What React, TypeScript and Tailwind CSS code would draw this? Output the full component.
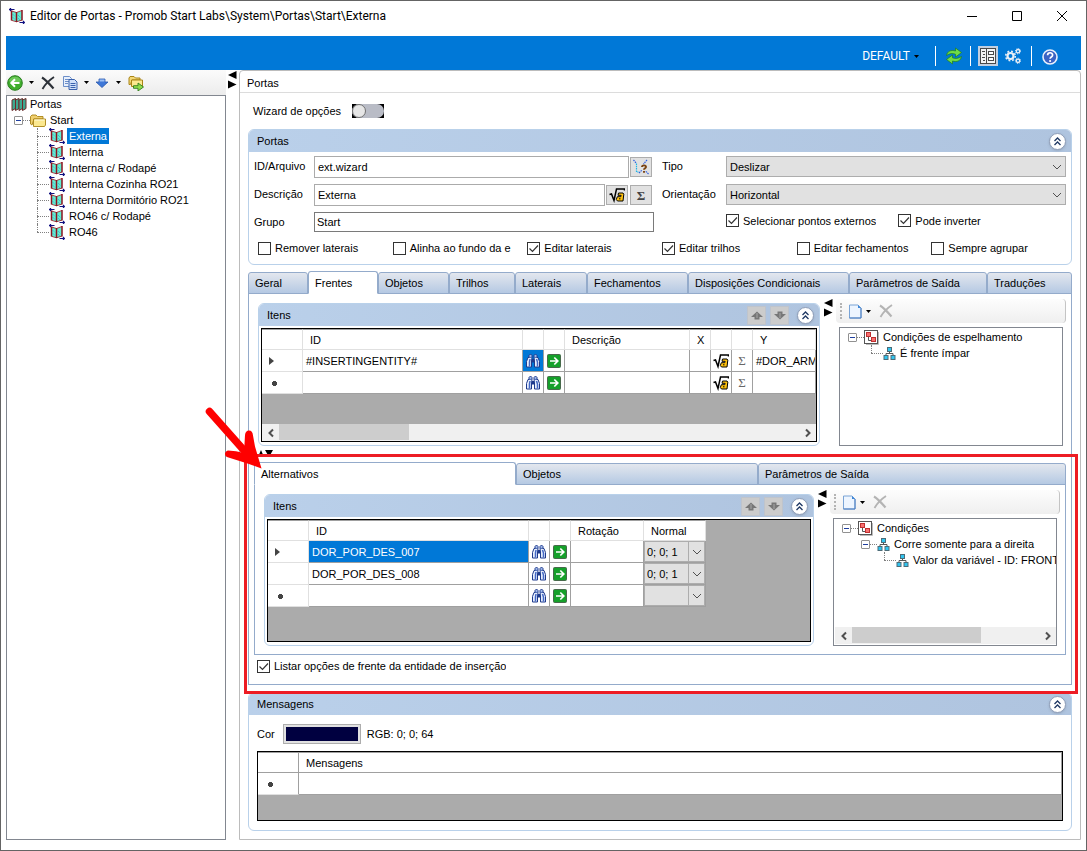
import { useState, type ReactNode } from 'react';
import clsx from 'clsx';

/* ---------- icons ---------- */

function DoorIcon() {
  return (
    <svg viewBox="0 0 16 16" className="h-4 w-4 shrink-0">
      <path d="M2.500 3l4.500 1.500v9L2.500 12z" fill="#62efd2" />
      <path d="M8 4.500L13 3v9l-5 1.500z" fill="#62efd2" />
      <path d="M3.500 6l3 3M3.500 9l3 3M9 7l3 3M9 10l2 2" stroke="#3aa0d8" strokeDasharray="1 1" />
      <path d="M2.500 2.500v10M7.500 4v10M13 2v10.500" stroke="#8a1420" strokeWidth="1.500" />
      <path d="M2.500 12.300l5 1.500L13 12M2.500 3l5 1.500L13 2.500" fill="none" stroke="#8a1420" strokeWidth=".8" />
      <path d="M0 1.500h5.500M2 0L.5 1.500 2 3M10.500 14.500h5M14 13l1.500 1.500L14 16" fill="none" stroke="#101080" strokeWidth="1.100" />
    </svg>
  );
}

function DoorsIcon() {
  return (
    <svg viewBox="0 0 16 16" className="h-4 w-4 shrink-0">
      {[1, 4.500, 8, 11.500].map((x) => (
        <path key={x} d={`M${x} 4l3.500-1.500v10l-3.500 2z`} fill="#3fa890" stroke="#6e2a2a" />
      ))}
    </svg>
  );
}

function FolderIcon() {
  return (
    <svg viewBox="0 0 16 16" className="h-4 w-4 shrink-0">
      <path d="M.5 12V4.500L2 3h4l1.500 1.500H13V7H4l-2 6z" fill="#f0d070" stroke="#a98416" strokeWidth=".9" />
      <path d="M3.500 7H15.500v6l-1 1.500h-11z" fill="#fbe88f" stroke="#a98416" strokeWidth=".9" />
      <path d="M4.500 8h10" stroke="#fffbe0" />
    </svg>
  );
}

function BackIcon() {
  return (
    <svg viewBox="0 0 16 16" className="h-4 w-4">
      <circle cx="8" cy="8" r="7.300" fill="#3fae2c" stroke="#2a7d20" />
      <path d="M2 6a6.300 6 0 0 1 12 0c-3 2-9 2-12 0z" fill="#8bd977" opacity=".6" />
      <path d="M12.500 8H4.500M8 4.300L4.300 8 8 11.700" fill="none" stroke="#fff" strokeWidth="2" />
    </svg>
  );
}

function CrossIcon({ muted = false }: { muted?: boolean }) {
  return (
    <svg viewBox="0 0 14 14" className="h-3.5 w-3.5">
      <path d="M1 1.500C5 4 9 8.500 12.500 12.500" fill="none" stroke={muted ? '#b4b4b4' : '#2c3138'} strokeWidth="2.200" />
      <path d="M13 1C8.500 4 4 8.500 1.500 13" fill="none" stroke={muted ? '#b4b4b4' : '#2c3138'} strokeWidth="1.800" />
    </svg>
  );
}

function CopyIcon() {
  return (
    <svg viewBox="0 0 16 16" className="h-4 w-4">
      <path d="M1.500 1.500h6l2 2v8h-8z" fill="#e8f0fc" stroke="#6d8fc8" />
      <path d="M3 4.500h4M3 6.500h4M3 8.500h3" stroke="#6d8fc8" />
      <path d="M7 4.500h5.500l2.500 2.500v7.500H7z" fill="#cfe0fa" stroke="#3a62ad" />
      <path d="M8.500 8.500h5M8.500 10.500h5M8.500 12.500h5" stroke="#3a62ad" />
    </svg>
  );
}

function DownArrowIcon() {
  return (
    <svg viewBox="0 0 14 10" className="h-2.5 w-3.5">
      <path d="M4 1h6v3h3L7 9.500 1 4h3z" fill="#3f78d8" stroke="#2b59ad" strokeWidth=".8" />
      <path d="M4.500 1.500h5v2h-5z" fill="#9cc0f5" />
    </svg>
  );
}

function FolderExportIcon() {
  return (
    <svg viewBox="0 0 16 16" className="h-4 w-4">
      <path d="M1 9.500V3L2 1.500h4l1.500 1.500H12v2H4L2.500 9.500z" fill="#f3d877" stroke="#a98416" />
      <path d="M3.500 5h11v6.500h-11z" fill="#fbe88f" stroke="#a98416" />
      <path d="M5.500 10.700h4.500V8l5.500 4-5.500 4v-2.700H5.500z" fill="#8fdc4c" stroke="#2f7d1c" strokeWidth=".9" />
    </svg>
  );
}

function RefreshIcon() {
  return (
    <svg viewBox="0 0 18 18" className="h-[18px] w-[18px]">
      <path d="M1.500 8.500C2 4.500 6 2.500 10.500 4V1L16.500 5.500 10.500 10V7.200C7.500 6 4.500 6.500 1.500 8.500z" fill="#6fdc46" stroke="#1f7d1c" strokeWidth=".7" />
      <path d="M16.500 9.500C16 13.500 12 15.500 7.500 14v3L1.500 12.500l6-4.500v2.800c3 1.200 6 .7 9-1.300z" fill="#6fdc46" stroke="#1f7d1c" strokeWidth=".7" />
    </svg>
  );
}

function FormIcon() {
  return (
    <svg viewBox="0 0 16 16" className="h-4 w-4" fill="none" stroke="#4a4a4a">
      <rect x=".5" y=".5" width="15" height="15" fill="#f4f4f4" />
      <path d="M6.500 1v14M2 3.500h3M3 6.500h2M2 9.500h3M3 12.500h2" />
      <rect x="8.500" y="3.500" width="5" height="3" fill="#fff" />
      <rect x="8.500" y="9.500" width="5" height="3" fill="#fff" />
    </svg>
  );
}

function GearsIcon() {
  return (
    <svg viewBox="0 0 16 16" className="h-4 w-4" fill="none" stroke="#e8eef6">
      <circle cx="5.500" cy="8" r="3" strokeWidth="2.200" />
      <circle cx="5.500" cy="8" r="4.800" strokeWidth="1.600" strokeDasharray="1.885 1.885" />
      <circle cx="13" cy="3.200" r="1.700" strokeWidth="1.400" />
      <circle cx="13" cy="3.200" r="2.600" strokeDasharray="1.020 1.020" />
      <circle cx="13" cy="12.800" r="1.700" strokeWidth="1.400" />
      <circle cx="13" cy="12.800" r="2.600" strokeDasharray="1.020 1.020" />
    </svg>
  );
}

function HelpIcon() {
  return (
    <svg viewBox="0 0 16 16" className="h-4 w-4">
      <circle cx="8" cy="8" r="7" fill="#3b63c4" stroke="#e8effc" strokeWidth="1.600" />
      <path d="M5.600 6.200C5.600 3 10.600 3 10.600 6c0 2-2.500 2-2.500 3.800" fill="none" stroke="#fff" strokeWidth="1.700" />
      <circle cx="8.100" cy="12" r="1.100" fill="#fff" />
    </svg>
  );
}

function BinocularsIcon() {
  return (
    <svg viewBox="0 0 16 16" className="h-4 w-4">
      <path d="M3 4.500h4L6.500 8v6h-5V8.500zM9 4.500h4l1.500 4V14h-5V8z" fill="#e6eefc" stroke="#1e3a8c" />
      <path d="M4 4.500v-2L5.500 1 7 2.500v2M9 4.500v-2L10.500 1 12 2.500v2" fill="#9db6e8" stroke="#1e3a8c" />
      <path d="M7 6h2v3.500H7z" fill="#1e3a8c" />
      <path d="M5 6L4.500 9v4.500M11.500 6l1 3v4.500" fill="none" stroke="#4468c4" strokeWidth="1.500" />
    </svg>
  );
}

function GoIcon() {
  return (
    <svg viewBox="0 0 14 14" className="h-3.5 w-3.5">
      <rect x=".5" y=".5" width="13" height="13" rx="1" fill="#15a02a" stroke="#47694b" />
      <path d="M3 7h7.500M7.300 3.500L10.800 7l-3.500 3.500" fill="none" stroke="#fff" strokeWidth="1.700" />
    </svg>
  );
}

function SqrtIcon() {
  return (
    <svg viewBox="0 0 16 16" className="h-4 w-4">
      <path d="M.5 7.500L2.500 7l2.500 6.500L7.500 2H15.500v1.500" fill="none" stroke="#000" strokeWidth="1.500" />
      <path d="M9.500 6h4.500l.8 1.200-.8 6.800H8.500l-1.200-1.500L8.300 9.700h3.500l.3-1.400H9z" fill="#ffc20e" stroke="#000" />
      <path d="M10 11.800h1.500" stroke="#000" />
    </svg>
  );
}

function WizardIcon() {
  return (
    <svg viewBox="0 0 16 16" className="h-4 w-4" fill="none">
      <path d="M.5 1l3 3.500M14 1l-3.500 4M15.500 15l-3-3M6 14l3-3" stroke="#2f5fe0" strokeWidth="1.200" strokeDasharray="1.500 .8" />
      <path d="M3.500 4.500v8.500h2" stroke="#1fb4e8" strokeWidth="1.200" strokeDasharray="1.500 .8" />
      <path d="M9 8C9 5.800 13 5.800 13 8c0 1.300-2 1.300-2 2.800M11 12v1.700" stroke="#7a4210" strokeWidth="1.900" />
    </svg>
  );
}

function PageIcon() {
  return (
    <svg viewBox="0 0 13 15" className="h-[15px] w-[13px]">
      <path d="M.5 1h8.500l3 3v10H.5z" fill="#edf5ff" stroke="#7aa4d6" />
      <path d="M9 1v3h3z" fill="#3f87d8" />
      <path d="M12 4v10H.5" fill="none" stroke="#4a7cc0" />
    </svg>
  );
}

function RootIcon() {
  return (
    <svg viewBox="0 0 15 15" className="h-[15px] w-[15px] shrink-0">
      <path d="M14.500 2v12.500H2" fill="none" stroke="#bbb" />
      <rect x=".5" y=".5" width="13" height="13" fill="#fff" stroke="#555" />
      <path d="M4.500 6v4.500H8" fill="none" stroke="#555" />
      <rect x="2.500" y="2.500" width="4" height="4" fill="#f87070" stroke="#c03030" />
      <rect x="7.500" y="7.500" width="4" height="4" fill="#f87070" stroke="#c03030" />
    </svg>
  );
}

function NodeIcon() {
  return (
    <svg viewBox="0 0 13 13" className="h-[13px] w-[13px] shrink-0">
      <path d="M6.500 4v3M3 9V6.500h7V9" fill="none" stroke="#555" />
      <rect x="4.500" y=".5" width="4" height="4" fill="#30c4f0" stroke="#4c6c78" />
      <rect x="1" y="8.500" width="4" height="4" fill="#30c4f0" stroke="#4c6c78" />
      <rect x="8" y="8.500" width="4" height="4" fill="#30c4f0" stroke="#4c6c78" />
    </svg>
  );
}

function Caret() {
  return (
    <svg viewBox="0 0 5 3" className="h-[3px] w-[5px] shrink-0">
      <path d="M0 0h5L2.500 3z" />
    </svg>
  );
}

function Chevron({ d, className }: { d: string; className?: string }) {
  return (
    <svg viewBox="0 0 10 10" className={clsx('h-2.5 w-2.5', className)} fill="none" stroke="#505050">
      <path d={d} />
    </svg>
  );
}

const DOWN = 'M1 3l4 4 4-4';
const LEFT = 'M7 1.500L3.500 5 7 8.500';
const RIGHT = 'M3 1.500L6.500 5 3 8.500';

/* ---------- building blocks ---------- */

function CollapseButton({ label }: { label: string }) {
  return (
    <button
      aria-label={`Recolher ${label}`}
      className="flex h-[17px] w-[17px] items-center justify-center rounded-full border border-[#8e9db8] bg-white shadow"
    >
      <svg viewBox="0 0 9 9" className="h-[9px] w-[9px]" fill="none" stroke="#1f3864" strokeWidth="1.300">
        <path d="M1.500 4L4.500 1l3 3M1.500 8l3-3 3 3" />
      </svg>
    </button>
  );
}

function MoveButton({ up = false }: { up?: boolean }) {
  return (
    <button
      aria-label={up ? 'Mover para cima' : 'Mover para baixo'}
      className="flex h-[19px] w-[19px] items-center justify-center border border-[#bfc4cc] bg-[#cccccc]"
    >
      <svg viewBox="0 0 12 9" className={clsx('h-[9px] w-3', !up && 'rotate-180')}>
        <path d="M6 .5L12 6H8.500v2.500h-5V6H0z" fill="#777" />
        <path d="M6 2v5" stroke="#a8a8a8" />
      </svg>
    </button>
  );
}

interface GroupProps {
  title: string;
  movable?: boolean;
  className?: string;
  children: ReactNode;
}

function Group({ title, movable = false, className, children }: GroupProps) {
  return (
    <section className={clsx('rounded-md border border-[#b9d1ea]', className)}>
      <header className="flex h-[22px] items-center rounded-t-[5px] bg-linear-to-r from-[#bad0ea] to-[#afc4df] pr-[5px] pl-2">
        <h2 className="flex-1">{title}</h2>
        {movable && (
          <div className="mr-2 flex gap-1">
            <MoveButton up />
            <MoveButton />
          </div>
        )}
        <CollapseButton label={title} />
      </header>
      {children}
    </section>
  );
}

interface Tab {
  name: string;
  width: string;
}

function Tabs({ tabs, initial }: { tabs: Tab[]; initial: string }) {
  const [active, setActive] = useState(initial);
  return (
    <div role="tablist" className="relative z-1 flex h-[23px] items-end">
      {tabs.map((tab) => (
        <button
          key={tab.name}
          role="tab"
          aria-selected={tab.name === active}
          onClick={() => setActive(tab.name)}
          className={clsx(
            'rounded-t-[3px] border border-[#94abcb] pl-1.5 text-left whitespace-nowrap',
            tab.width,
            tab.name === active ? 'h-[23px] border-b-white bg-white' : 'h-[22px] bg-linear-to-b from-[#e3e7ee] to-[#b5c9e3]',
          )}
        >
          {tab.name}
        </button>
      ))}
    </div>
  );
}

function Check({ label, checked = false }: { label: string; checked?: boolean }) {
  return (
    <label className="flex h-4 min-w-0 items-center gap-1 overflow-hidden whitespace-nowrap">
      <span className="relative h-[13px] w-[13px] shrink-0">
        <input
          type="checkbox"
          defaultChecked={checked}
          className="peer block h-[13px] w-[13px] appearance-none border border-[#333] bg-white"
        />
        <svg
          viewBox="0 0 13 13"
          className="pointer-events-none absolute inset-0 hidden h-[13px] w-[13px] peer-checked:block"
          fill="none"
          stroke="#333"
          strokeWidth="1.200"
        >
          <path d="M2.500 6.500l3 3 5.500-6" />
        </svg>
      </span>
      {label}
    </label>
  );
}

function SelectField({ id, label, value, options }: { id: string; label: string; value: string; options: string[] }) {
  return (
    <div className="flex h-7">
      <label htmlFor={id} className="flex h-5 w-16 shrink-0 items-center">
        {label}
      </label>
      <div className="relative h-[21px] flex-1">
        <select id={id} defaultValue={value} className="h-full w-full appearance-none border border-[#adadad] bg-[#e1e1e1] px-[3px]">
          {options.map((option) => (
            <option key={option}>{option}</option>
          ))}
        </select>
        <Chevron d={DOWN} className="pointer-events-none absolute top-1.5 right-1" />
      </div>
    </div>
  );
}

function TextField({ id, label, value, children }: { id: string; label: string; value: string; children?: ReactNode }) {
  return (
    <div className={clsx('flex h-7', children && 'pr-0.5')}>
      <label htmlFor={id} className="flex h-5 w-[60px] shrink-0 items-center">
        {label}
      </label>
      <input
        id={id}
        defaultValue={value}
        className={clsx('min-w-0 flex-1 border bg-white', children ? 'h-[22px] border-[#ababab] px-[3px]' : 'h-5 border-[#7a7a7a] px-0.5')}
      />
      {children && <div className="ml-px flex gap-0.5 pt-px">{children}</div>}
    </div>
  );
}

function SmallButton({ label, children }: { label: string; children: ReactNode }) {
  return (
    <button aria-label={label} className="flex h-5 w-[22px] items-center justify-center border border-[#adadad] bg-[#e1e1e1]">
      {children}
    </button>
  );
}

function Sigma({ muted = false }: { muted?: boolean }) {
  return (
    <span className={clsx("font-['Liberation_Serif',serif] text-[13px] leading-none", muted ? 'text-[#666]' : 'font-bold text-[#444]')}>Σ</span>
  );
}

function SplitArrows() {
  return (
    <svg viewBox="0 0 9 18" className="h-[18px] w-[9px]">
      <path d="M8.500 0v8L0 4zM0 9.500v8l8.500-4z" />
    </svg>
  );
}

function ScrollBar({ thumb }: { thumb: string }) {
  return (
    <div className="flex h-[17px] bg-[#f0f0f0]">
      <button aria-label="Rolar para a esquerda" className="flex w-[17px] items-center justify-center">
        <Chevron d={LEFT} className="stroke-2" />
      </button>
      <div className="flex-1">
        <div className={clsx('h-4 bg-[#cdcdcd]', thumb)} />
      </div>
      <button aria-label="Rolar para a direita" className="flex w-[17px] items-center justify-center">
        <Chevron d={RIGHT} className="stroke-2" />
      </button>
    </div>
  );
}

/* ---------- tree ---------- */

interface TreeRowProps {
  level: 0 | 1 | 2;
  icon: ReactNode;
  text: string;
  expander?: boolean;
  selected?: boolean;
  last?: boolean;
}

const INDENT = ['pl-[7px]', 'pl-[26px]', 'pl-[45px]'];

function TreeRow({ level, icon, text, expander = false, selected = false, last = false }: TreeRowProps) {
  return (
    <li className={clsx('flex h-4 items-center whitespace-nowrap', INDENT[level])}>
      <span className="relative flex h-4 w-4 shrink-0 items-center">
        {expander ? (
          <>
            <span className="flex h-[9px] w-[9px] items-center justify-center rounded-[1px] border border-[#919191] bg-white">
              <span className="h-px w-[5px] bg-[#1f3fa0]" />
            </span>
            <span className="w-[7px] border-t border-dotted border-[#808080]" />
          </>
        ) : (
          <>
            <span className={clsx('absolute top-0 left-1 border-l border-dotted border-[#808080]', last ? 'h-2' : 'h-4')} />
            <span className="absolute top-2 left-1 w-3 border-t border-dotted border-[#808080]" />
          </>
        )}
      </span>
      {icon}
      <span className={clsx('ml-0.5 h-4 px-0.5 leading-4', selected && 'bg-[#0078d7] text-white')}>{text}</span>
    </li>
  );
}

function ConditionsPane({ children, scroll = false }: { children: ReactNode; scroll?: boolean }) {
  return (
    <div className="flex w-[230px] shrink-0 flex-col">
      <div className="flex h-6 items-center rounded-sm border-r border-[#c4c4c4] bg-linear-to-b from-[#fdfdfd] to-[#efefef] pl-1">
        <span className="h-4 border-l-2 border-dotted border-[#b4b4b4]" />
        <button aria-label="Nova condição" className="ml-[7px] flex items-center gap-1">
          <PageIcon />
          <Caret />
        </button>
        <button aria-label="Remover condição" className="ml-2">
          <CrossIcon muted />
        </button>
      </div>
      <div className="mx-[3px] mt-1 flex flex-1 flex-col overflow-hidden border border-[#828790] py-px pl-px">
        <ul className="flex-1">{children}</ul>
        {scroll && <ScrollBar thumb="w-[69%]" />}
      </div>
    </div>
  );
}

/* ---------- data grids ---------- */

const HEAD = 'h-[21px] border-t border-r border-b border-[#e0e0e0] border-t-[#a0a0a0] bg-white px-[7px] text-left font-normal whitespace-nowrap';
const CELL = 'h-[22px] border-r border-b border-[#a0a0a0] bg-white px-[3px] overflow-hidden whitespace-nowrap';
const ROWHEAD = 'h-[22px] border-r border-b border-[#e0e0e0] bg-white pl-[7px] text-left';

function RowMarker({ kind }: { kind: 'current' | 'new' | 'none' }) {
  if (kind === 'none') return null;
  return (
    <svg viewBox="0 0 10 10" className="h-2.5 w-2.5" fill="#444">
      {kind === 'current' ? <path d="M0 1v8l5-4z" /> : <path d="M3 4h1V3h3v1h1v3H7v1H4V7H3z" />}
    </svg>
  );
}

function IconCell({ label, children, selected = false }: { label: string; children: ReactNode; selected?: boolean }) {
  return (
    <td className={clsx('h-[22px] border-r border-b border-[#a0a0a0]', selected ? 'bg-[#0078d7]' : 'bg-white')}>
      <button aria-label={label} className="flex w-full items-center justify-center">
        {children}
      </button>
    </td>
  );
}

function FrontItems() {
  const rows = [
    { kind: 'current', id: '#INSERTINGENTITY#', y: '#DOR_ARM' },
    { kind: 'new', id: '', y: '' },
  ] as const;
  return (
    <div className="mx-0.5 mt-0.5 mb-[3px] flex h-[114px] flex-col overflow-hidden border border-black bg-[#ababab]">
      <table className="w-full table-fixed border-separate border-spacing-0">
        <thead>
          <tr>
            <th className={clsx(HEAD, 'w-[41px]')} />
            <th className={clsx(HEAD, 'w-[220px]')}>ID</th>
            <th className={clsx(HEAD, 'w-[21px]')} />
            <th className={clsx(HEAD, 'w-[21px]')} />
            <th className={clsx(HEAD, 'w-[125px]')}>Descrição</th>
            <th className={clsx(HEAD, 'w-[21px]')}>X</th>
            <th className={clsx(HEAD, 'w-[21px]')} />
            <th className={clsx(HEAD, 'w-[21px]')} />
            <th className={HEAD}>Y</th>
          </tr>
        </thead>
        <tbody>
          {rows.map((row) => (
            <tr key={row.kind}>
              <th className={ROWHEAD}>
                <RowMarker kind={row.kind} />
              </th>
              <td className={CELL}>{row.id}</td>
              <IconCell label="Localizar" selected={row.kind === 'current'}>
                <BinocularsIcon />
              </IconCell>
              <IconCell label="Abrir">
                <GoIcon />
              </IconCell>
              <td className={CELL} />
              <td className={CELL} />
              <IconCell label="Variável">
                <SqrtIcon />
              </IconCell>
              <IconCell label="Expressão">
                <Sigma muted />
              </IconCell>
              <td className={CELL}>{row.y}</td>
            </tr>
          ))}
        </tbody>
      </table>
      <div className="mt-auto">
        <ScrollBar thumb="w-1/4" />
      </div>
    </div>
  );
}

function AlternativeItems() {
  const rows = [
    { kind: 'current', id: 'DOR_POR_DES_007', normal: '0; 0; 1' },
    { kind: 'none', id: 'DOR_POR_DES_008', normal: '0; 0; 1' },
    { kind: 'new', id: '', normal: '' },
  ] as const;
  return (
    <div className="mx-0.5 mt-0.5 mb-[3px] h-[123px] overflow-hidden border border-black bg-[#ababab]">
      <table className="w-[438px] table-fixed border-separate border-spacing-0">
        <thead>
          <tr>
            <th className={clsx(HEAD, 'w-[41px]')} />
            <th className={clsx(HEAD, 'w-[220px]')}>ID</th>
            <th className={clsx(HEAD, 'w-[21px]')} />
            <th className={clsx(HEAD, 'w-[21px]')} />
            <th className={clsx(HEAD, 'w-[73px]')}>Rotação</th>
            <th className={HEAD}>Normal</th>
          </tr>
        </thead>
        <tbody>
          {rows.map((row) => (
            <tr key={row.kind}>
              <th className={ROWHEAD}>
                <RowMarker kind={row.kind} />
              </th>
              <td className={clsx(CELL, row.kind === 'current' && 'bg-[#0078d7]! text-white')}>{row.id}</td>
              <IconCell label="Localizar">
                <BinocularsIcon />
              </IconCell>
              <IconCell label="Abrir">
                <GoIcon />
              </IconCell>
              <td className={CELL} />
              <td className="h-[22px] border-r border-b border-[#a0a0a0] p-0">
                <div className="relative h-[21px] border border-[#adadad] bg-[#e1e1e1]">
                  <select aria-label="Normal" defaultValue={row.normal} className="block h-full w-full appearance-none pl-0.5">
                    <option>{row.normal}</option>
                  </select>
                  <span className="pointer-events-none absolute inset-y-0 right-0 flex w-4 items-center justify-center border-l border-[#adadad]">
                    <Chevron d={DOWN} />
                  </span>
                </div>
              </td>
            </tr>
          ))}
        </tbody>
      </table>
    </div>
  );
}

/* ---------- page ---------- */

const MAIN_TABS: Tab[] = [
  { name: 'Geral', width: 'w-[60px]' },
  { name: 'Frentes', width: 'w-[70px]' },
  { name: 'Objetos', width: 'w-[71px]' },
  { name: 'Trilhos', width: 'w-[66px]' },
  { name: 'Laterais', width: 'w-[72px]' },
  { name: 'Fechamentos', width: 'w-[101px]' },
  { name: 'Disposições Condicionais', width: 'w-[161px]' },
  { name: 'Parâmetros de Saída', width: 'w-[138px]' },
  { name: 'Traduções', width: 'flex-1' },
];

const FRONT_TABS: Tab[] = [
  { name: 'Alternativos', width: 'w-[262px]' },
  { name: 'Objetos', width: 'w-[242px]' },
  { name: 'Parâmetros de Saída', width: 'flex-1' },
];

const DOORS = ['Externa', 'Interna', 'Interna c/ Rodapé', 'Interna Cozinha RO21', 'Interna Dormitório RO21', 'RO46 c/ Rodapé', 'RO46'];

function TitleBar() {
  return (
    <div className="flex h-[35px] items-start pr-0.5 pl-2">
      <div className="flex h-[29px] flex-1 items-center gap-[5px]">
        <DoorIcon />
        <h1 className="font-[Roboto,sans-serif] text-[12px]">Editor de Portas - Promob Start Labs\System\Portas\Start\Externa</h1>
      </div>
      {[
        { label: 'Minimizar', d: 'M0 5.500h10' },
        { label: 'Maximizar', d: 'M.5.500h9v9h-9z' },
        { label: 'Fechar', d: 'M0 0l10 10M10 0L0 10' },
      ].map((control) => (
        <button key={control.label} aria-label={control.label} className="flex h-[29px] w-[45px] items-center justify-center">
          <svg viewBox="0 0 10 10" className="h-2.5 w-2.5 overflow-visible" fill="none" stroke="#000">
            <path d={control.d} />
          </svg>
        </button>
      ))}
    </div>
  );
}

function Ribbon() {
  return (
    <div className="mx-[5px] flex h-[34px] items-end justify-end bg-[#0078d7] pr-[23px] pb-1">
      <button className="flex h-5 items-center gap-1 font-[Roboto,sans-serif] text-[12px] text-white">
        DEFAULT <Caret />
      </button>
      <span className="mr-[9px] ml-4 h-5 w-px bg-white" />
      <button aria-label="Atualizar" className="flex h-5 items-center">
        <RefreshIcon />
      </button>
      <span className="mx-[7px] h-5 w-px bg-white" />
      <button aria-label="Formulário" className="flex h-5 w-5 items-center justify-center bg-[#c2cfe0]">
        <FormIcon />
      </button>
      <button aria-label="Configurações" className="ml-[7px] flex h-5 items-center">
        <GearsIcon />
      </button>
      <span className="mx-[10px] h-5 w-px bg-white" />
      <button aria-label="Ajuda" className="flex h-[18px] items-center">
        <HelpIcon />
      </button>
    </div>
  );
}

function Sidebar() {
  return (
    <aside className="flex w-[220px] shrink-0 flex-col">
      <div className="flex h-[25px] items-center bg-linear-to-b from-[#fbfbfb] to-[#ececec] pl-px">
        <button aria-label="Voltar" className="flex items-center gap-1.5">
          <BackIcon />
          <Caret />
        </button>
        <button aria-label="Excluir" className="ml-[7px]">
          <CrossIcon />
        </button>
        <button aria-label="Copiar" className="ml-[7px] flex items-center gap-1.5">
          <CopyIcon />
          <Caret />
        </button>
        <button aria-label="Mover" className="ml-1.5 flex items-center gap-[7px]">
          <DownArrowIcon />
          <Caret />
        </button>
        <button aria-label="Exportar" className="ml-[7px]">
          <FolderExportIcon />
        </button>
      </div>
      <ul className="flex-1 border border-[#828790]">
        <li className="flex h-4 items-center gap-[3px] pl-1">
          <DoorsIcon />
          Portas
        </li>
        <TreeRow level={0} expander icon={<FolderIcon />} text="Start" />
        {DOORS.map((door, i) => (
          <TreeRow key={door} level={1} icon={<DoorIcon />} text={door} selected={i === 0} last={i === DOORS.length - 1} />
        ))}
      </ul>
    </aside>
  );
}

function DoorForm() {
  return (
    <Group title="Portas">
      <div className="px-[5px] pt-1 pb-2">
        <div className="grid grid-cols-[100fr_101fr] gap-x-2">
          <div>
            <TextField id="arquivo" label="ID/Arquivo" value="ext.wizard">
              <SmallButton label="Assistente">
                <WizardIcon />
              </SmallButton>
            </TextField>
            <TextField id="descricao" label="Descrição" value="Externa">
              <SmallButton label="Variável">
                <SqrtIcon />
              </SmallButton>
              <SmallButton label="Expressão">
                <Sigma />
              </SmallButton>
            </TextField>
            <TextField id="grupo" label="Grupo" value="Start" />
          </div>
          <div>
            <SelectField id="tipo" label="Tipo" value="Deslizar" options={['Deslizar', 'Girar']} />
            <SelectField id="orientacao" label="Orientação" value="Horizontal" options={['Horizontal', 'Vertical']} />
            <div className="flex h-[17px] items-center gap-[22px] pl-16">
              <Check label="Selecionar pontos externos" checked />
              <Check label="Pode inverter" checked />
            </div>
          </div>
        </div>
        <div className="grid grid-cols-6 pl-1">
          <Check label="Remover laterais" />
          <Check label="Alinha ao fundo da e" />
          <Check label="Editar laterais" checked />
          <Check label="Editar trilhos" checked />
          <Check label="Editar fechamentos" />
          <Check label="Sempre agrupar" />
        </div>
      </div>
    </Group>
  );
}

function Highlight() {
  return (
    <>
      <div className="pointer-events-none absolute -top-2 -right-3 -bottom-2.5 -left-2.5 z-10 border-3 border-[#ed1c24]" />
      <svg viewBox="205 405 60 66" className="pointer-events-none absolute -top-[57px] -left-[49px] z-20 h-[66px] w-[60px]">
        <path d="M209.500 411.500L249 456" stroke="#fe0000" strokeWidth="7.500" strokeLinecap="round" />
        <path
          d="M228 450.500q8 0 16 2.500l1-18q.5-4.500 4-4.500t4 5l2 11 6.500 22-14-5-19-6q-3.500-1-3.500-3.500t3-3.500z"
          fill="#fe0000"
        />
      </svg>
    </>
  );
}

function FrontsPanel() {
  return (
    <div className="-mt-px border border-[#94abcb] px-[5px] pt-[5px]">
      <div className="flex pl-1">
        <Group title="Itens" movable className="mt-1 min-w-0 flex-1">
          <FrontItems />
        </Group>
        <div className="flex w-4 shrink-0 justify-center">
          <SplitArrows />
        </div>
        <ConditionsPane>
          <TreeRow level={0} expander icon={<RootIcon />} text="Condições de espelhamento" />
          <TreeRow level={1} last icon={<NodeIcon />} text="É frente ímpar" />
        </ConditionsPane>
      </div>
      <div className="flex h-4 items-center pl-1">
        <svg viewBox="0 0 16 8" className="h-2 w-4">
          <path d="M0 7h6L3 0zM7 0h8l-4 7z" />
        </svg>
      </div>

      <div className="relative pb-[7px]">
        <Highlight />
        <Tabs tabs={FRONT_TABS} initial="Alternativos" />
        <div className="-mt-px border border-[#94abcb] px-[5px] pt-[5px] pb-2">
          <div className="flex pl-1">
            <Group title="Itens" movable className="mt-1 min-w-0 flex-1">
              <AlternativeItems />
            </Group>
            <div className="flex w-4 shrink-0 justify-center">
              <SplitArrows />
            </div>
            <ConditionsPane scroll>
              <TreeRow level={0} expander icon={<RootIcon />} text="Condições" />
              <TreeRow level={1} expander icon={<NodeIcon />} text="Corre somente para a direita" />
              <TreeRow level={2} last icon={<NodeIcon />} text="Valor da variável - ID: FRONT" />
            </ConditionsPane>
          </div>
        </div>
        <div className="flex h-[22px] items-center pl-[3px]">
          <Check label="Listar opções de frente da entidade de inserção" checked />
        </div>
      </div>
    </div>
  );
}

function Messages() {
  return (
    <Group title="Mensagens" className="mt-[7px]">
      <div className="px-2 pt-[9px] pb-[9px]">
        <div className="flex h-5 items-center">
          <label htmlFor="cor">Cor</label>
          <button id="cor" aria-label="Cor" className="mr-1.5 ml-2 h-5 w-[78px] border border-[#adadad] bg-[#e1e1e1] p-0.5">
            <span className="block h-full bg-[#000040]" />
          </button>
          RGB: 0; 0; 64
        </div>
        <div className="mt-[7px] h-[70px] overflow-hidden border border-black bg-[#ababab]">
          <table className="w-full table-fixed border-separate border-spacing-0">
            <thead>
              <tr>
                <th className={clsx(HEAD, 'w-[41px] border-[#a0a0a0]!')} />
                <th className={clsx(HEAD, 'border-[#a0a0a0]!')}>Mensagens</th>
              </tr>
            </thead>
            <tbody>
              <tr>
                <th className={clsx(ROWHEAD, 'border-r-[#a0a0a0]!')}>
                  <RowMarker kind="new" />
                </th>
                <td className={CELL} />
              </tr>
            </tbody>
          </table>
        </div>
      </div>
    </Group>
  );
}

export default function App() {
  const [wizard, setWizard] = useState(false);

  return (
    <div className="flex min-h-screen flex-col border border-[#646464] bg-white font-['Liberation_Sans',Arial,sans-serif] text-[11px] leading-4 text-black">
      <TitleBar />
      <Ribbon />
      <div className="flex flex-1 px-[5px] pb-2.5">
        <Sidebar />
        <div className="flex w-[13px] shrink-0 justify-center pt-px">
          <SplitArrows />
        </div>
        <main className="min-w-0 flex-1 rounded-t-sm border border-[#bcbcbc]">
          <div className="flex h-[22px] items-center border-b border-[#dcdcdc] pt-0.5 pl-[7px]">Portas</div>
          <div className="px-2 pb-2">
            <div className="flex h-9 items-center gap-[11px] pl-[5px]">
              <span>Wizard de opções</span>
              <button
                role="switch"
                aria-checked={wizard}
                aria-label="Wizard de opções"
                onClick={() => setWizard(!wizard)}
                className="h-3.5 w-8 bg-black"
              >
                <span className={clsx('flex h-full rounded-full bg-[#b9bcc6]', wizard && 'justify-end')}>
                  <span className="h-3.5 w-3.5 rounded-full border border-[#707070] bg-[#e6e6e6]" />
                </span>
              </button>
            </div>
            <DoorForm />
            <div className="mt-1.5">
              <Tabs tabs={MAIN_TABS} initial="Frentes" />
              <FrontsPanel />
            </div>
            <Messages />
          </div>
        </main>
      </div>
    </div>
  );
}
